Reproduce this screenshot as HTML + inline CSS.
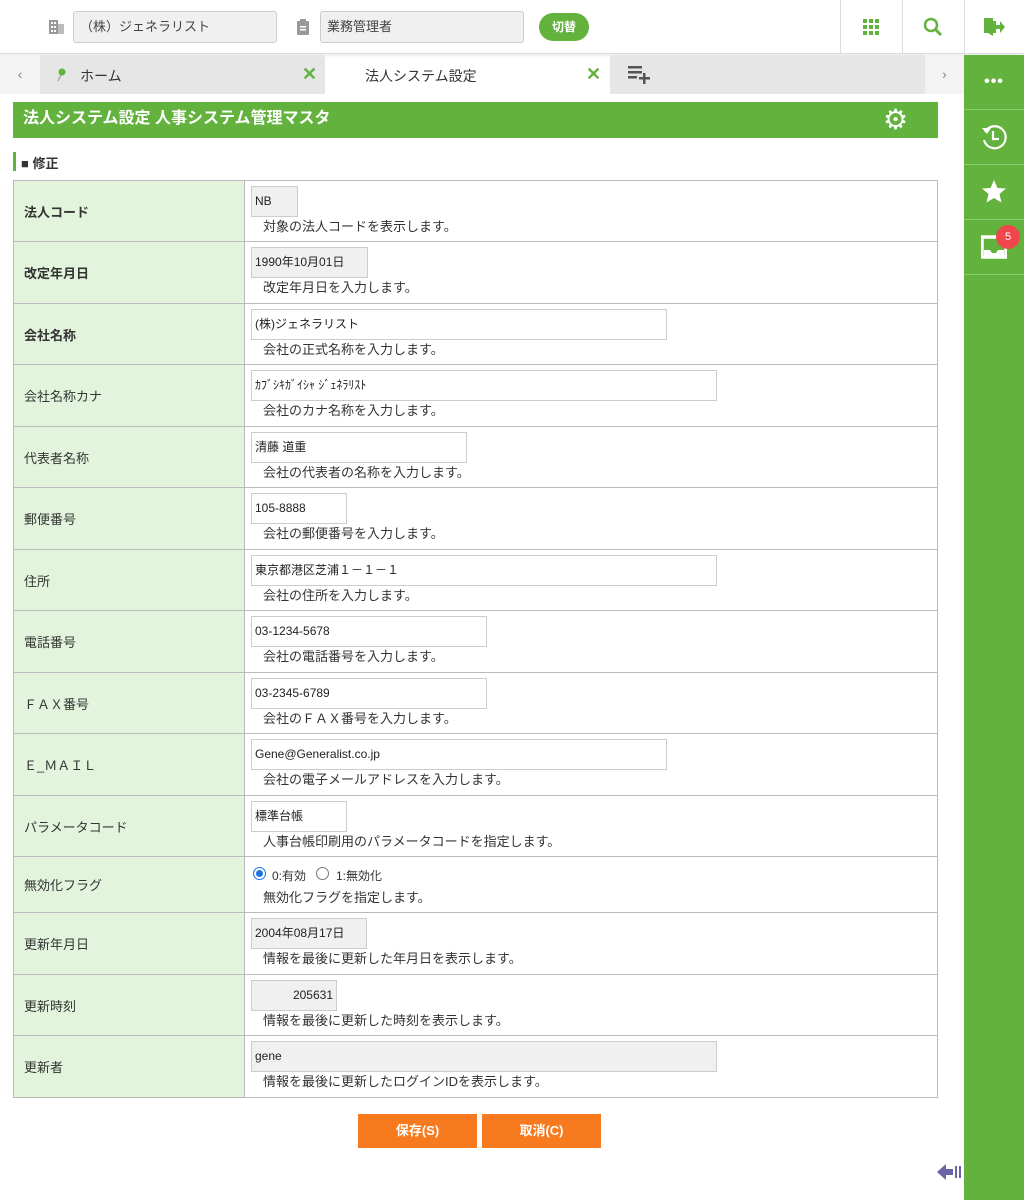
<!DOCTYPE html>
<html><head><meta charset="utf-8"><style>
*{box-sizing:border-box;margin:0;padding:0}
body{width:1024px;height:1200px;overflow:hidden;background:#fff;font-family:"Liberation Sans","Noto Sans CJK JP",sans-serif;font-size:13px;color:#333;position:relative}
.a{position:absolute}
.top{left:0;top:0;width:1024px;height:54px;background:#fff;border-bottom:1px solid #ddd;box-shadow:0 2px 3px rgba(0,0,0,.08)}
.sel{height:32px;top:11px;background:#f0f0f0;border:1px solid #ccc;border-radius:3px;font-size:13px;line-height:30px;padding-left:6px;color:#444}
.row{left:13px;width:925px;border:1px solid #bbb;border-top:none}
.lab{position:absolute;left:0;top:0;bottom:0;width:231px;background:#e2f5dc;border-right:1px solid #bbb;padding-left:10px;display:flex;align-items:center;font-size:13px;color:#333}
.inp{position:absolute;left:237px;top:5px;height:31px;border:1px solid #ccc;background:#fff;font-size:12px;line-height:29px;padding-left:3px;color:#222}
.g{background:#f0f0f0}
.ds{position:absolute;left:249px;top:35px;font-size:13px;color:#333}
.sb{left:964px;top:55px;width:60px;height:1145px;background:#62b23d}
.sbi{position:absolute;left:0;width:60px;height:55px;border-bottom:1px solid #8ccb6f;display:flex;align-items:center;justify-content:center}
.btn{top:1114px;width:119px;height:34px;background:#f77a1f;color:#fff;font-weight:bold;font-size:13px;text-align:center;line-height:34px}
</style></head><body>
<div class="a top"></div>
<svg class="a" style="left:49px;top:19px" width="16" height="16"><rect x="0" y="1" width="9" height="14" fill="#999"/><rect x="9" y="5" width="6" height="10" fill="#bbb"/><g fill="#fff"><rect x="2" y="3" width="2" height="2"/><rect x="5" y="3" width="2" height="2"/><rect x="2" y="7" width="2" height="2"/><rect x="5" y="7" width="2" height="2"/><rect x="2" y="11" width="2" height="2"/><rect x="5" y="11" width="2" height="2"/></g></svg>
<div class="a sel" style="left:73px;width:204px">（株）ジェネラリスト</div>
<svg class="a" style="left:297px;top:19px" width="12" height="16"><rect x="0" y="2" width="12" height="14" rx="1" fill="#999"/><rect x="3" y="0" width="6" height="4" fill="#999"/><rect x="3" y="7" width="6" height="1.5" fill="#fff"/><rect x="3" y="10" width="6" height="1.5" fill="#fff"/></svg>
<div class="a sel" style="left:320px;width:204px">業務管理者</div>
<div class="a" style="left:539px;top:13px;width:50px;height:28px;border-radius:14px;background:#62b23d;color:#fff;font-weight:bold;font-size:12px;text-align:center;line-height:28px">切替</div>
<div class="a" style="left:840px;top:0;width:1px;height:54px;background:#ddd"></div>
<div class="a" style="left:902px;top:0;width:1px;height:54px;background:#ddd"></div>
<div class="a" style="left:964px;top:0;width:1px;height:54px;background:#ddd"></div>
<svg class="a" style="left:863px;top:19px" width="17" height="17" fill="#62b23d"><rect x="0" y="0" width="4" height="4"/><rect x="6" y="0" width="4" height="4"/><rect x="12" y="0" width="4" height="4"/><rect x="0" y="6" width="4" height="4"/><rect x="6" y="6" width="4" height="4"/><rect x="12" y="6" width="4" height="4"/><rect x="0" y="12" width="4" height="4"/><rect x="6" y="12" width="4" height="4"/><rect x="12" y="12" width="4" height="4"/></svg>
<svg class="a" style="left:923px;top:17px" width="20" height="20"><circle cx="8" cy="8" r="6" fill="none" stroke="#62b23d" stroke-width="2.5"/><line x1="12" y1="12" x2="18" y2="18" stroke="#62b23d" stroke-width="3"/></svg>
<svg class="a" style="left:983px;top:17px" width="22" height="20" fill="#62b23d"><path d="M1 1h9v18l-5-3h-4z"/><rect x="10" y="4" width="3" height="12"/><path d="M12 8h5v-4l5 6-5 6v-4h-5z"/></svg>
<div class="a" style="left:0;top:55px;width:40px;height:39px;background:#f3f3f3;color:#888;text-align:center;line-height:39px;font-size:14px">&lsaquo;</div>
<div class="a" style="left:40px;top:55px;width:285px;height:39px;background:#e6e6e6"></div>
<svg class="a" style="left:56px;top:68px" width="10" height="14"><circle cx="6" cy="4" r="3.5" fill="#62b23d"/><line x1="5" y1="7" x2="2" y2="13" stroke="#aaa" stroke-width="1.5"/></svg>
<div class="a" style="left:80px;top:66px;font-size:14px;color:#333">ホーム</div>
<div class="a" style="left:302px;top:64px;font-size:18px;font-weight:bold;color:#62b23d">✕</div>
<div class="a" style="left:365px;top:66px;font-size:14px;color:#333">法人システム設定</div>
<div class="a" style="left:586px;top:64px;font-size:18px;font-weight:bold;color:#62b23d">✕</div>
<div class="a" style="left:610px;top:55px;width:315px;height:39px;background:#e6e6e6"></div>
<svg class="a" style="left:628px;top:66px" width="24" height="18" fill="#555"><rect x="0" y="0" width="14" height="2.5"/><rect x="0" y="5" width="14" height="2.5"/><rect x="0" y="10" width="9" height="2.5"/><rect x="15" y="7" width="2.5" height="11"/><rect x="11" y="11" width="11" height="2.5"/></svg>
<div class="a" style="left:925px;top:55px;width:39px;height:39px;background:#f3f3f3;color:#888;text-align:center;line-height:39px;font-size:14px">&rsaquo;</div>
<div class="a" style="left:13px;top:102px;width:925px;height:36px;background:#62b23d;color:#fff;font-weight:bold;font-size:16px;line-height:34px;padding-left:10px">法人システム設定 人事システム管理マスタ</div>
<div class="a" style="left:883px;top:104px;color:#fff;font-size:28px;line-height:32px">⚙</div>
<div class="a" style="left:13px;top:152px;width:3px;height:19px;background:#62b23d"></div>
<div class="a" style="left:21px;top:153px;font-weight:bold;font-size:13px">■ 修正</div>
<div class="a" style="left:13px;top:180px;width:925px;height:1px;background:#bbb"></div>
<div class="a row" style="top:181px;height:61px"><div class="lab" style="font-weight:bold">法人コード</div><div class="inp g" style="width:47px">NB</div><div class="ds">対象の法人コードを表示します。</div></div>
<div class="a row" style="top:242px;height:62px"><div class="lab" style="font-weight:bold">改定年月日</div><div class="inp g" style="width:117px">1990年10月01日</div><div class="ds">改定年月日を入力します。</div></div>
<div class="a row" style="top:304px;height:61px"><div class="lab" style="font-weight:bold">会社名称</div><div class="inp" style="width:416px">(株)ジェネラリスト</div><div class="ds">会社の正式名称を入力します。</div></div>
<div class="a row" style="top:365px;height:62px"><div class="lab">会社名称カナ</div><div class="inp" style="width:466px">ｶﾌﾞｼｷｶﾞｲｼｬ ｼﾞｪﾈﾗﾘｽﾄ</div><div class="ds">会社のカナ名称を入力します。</div></div>
<div class="a row" style="top:427px;height:61px"><div class="lab">代表者名称</div><div class="inp" style="width:216px">清藤 道重</div><div class="ds">会社の代表者の名称を入力します。</div></div>
<div class="a row" style="top:488px;height:62px"><div class="lab">郵便番号</div><div class="inp" style="width:96px">105-8888</div><div class="ds">会社の郵便番号を入力します。</div></div>
<div class="a row" style="top:550px;height:61px"><div class="lab">住所</div><div class="inp" style="width:466px">東京都港区芝浦１－１－１</div><div class="ds">会社の住所を入力します。</div></div>
<div class="a row" style="top:611px;height:62px"><div class="lab">電話番号</div><div class="inp" style="width:236px">03-1234-5678</div><div class="ds">会社の電話番号を入力します。</div></div>
<div class="a row" style="top:673px;height:61px"><div class="lab">ＦＡＸ番号</div><div class="inp" style="width:236px">03-2345-6789</div><div class="ds">会社のＦＡＸ番号を入力します。</div></div>
<div class="a row" style="top:734px;height:62px"><div class="lab">Ｅ_ＭＡＩＬ</div><div class="inp" style="width:416px">Gene@Generalist.co.jp</div><div class="ds">会社の電子メールアドレスを入力します。</div></div>
<div class="a row" style="top:796px;height:61px"><div class="lab">パラメータコード</div><div class="inp" style="width:96px">標準台帳</div><div class="ds">人事台帳印刷用のパラメータコードを指定します。</div></div>
<div class="a row" style="top:857px;height:56px"><div class="lab">無効化フラグ</div>
<div style="position:absolute;left:239px;top:10px;width:13px;height:13px;border-radius:50%;border:1px solid #1a73e8;background:#fff"><div style="margin:2px;width:7px;height:7px;border-radius:50%;background:#1a73e8"></div></div>
<div style="position:absolute;left:258px;top:10px;font-size:12px">0:有効</div>
<div style="position:absolute;left:302px;top:10px;width:13px;height:13px;border-radius:50%;border:1px solid #777;background:#fff"></div>
<div style="position:absolute;left:322px;top:10px;font-size:12px">1:無効化</div>
<div class="ds" style="top:30px">無効化フラグを指定します。</div></div>
<div class="a row" style="top:913px;height:62px"><div class="lab">更新年月日</div><div class="inp g" style="width:116px">2004年08月17日</div><div class="ds">情報を最後に更新した年月日を表示します。</div></div>
<div class="a row" style="top:975px;height:61px"><div class="lab">更新時刻</div><div class="inp g" style="width:86px;text-align:right;padding-right:3px">205631</div><div class="ds">情報を最後に更新した時刻を表示します。</div></div>
<div class="a row" style="top:1036px;height:62px"><div class="lab">更新者</div><div class="inp g" style="width:466px">gene</div><div class="ds">情報を最後に更新したログインIDを表示します。</div></div>
<div class="a btn" style="left:358px">保存(S)</div>
<div class="a btn" style="left:482px">取消(C)</div>
<svg class="a" style="left:937px;top:1162px" width="26" height="20" fill="#6a64a8"><path d="M0 10l9-8v5h7v6h-7v5z"/><rect x="18" y="4" width="2" height="12"/><rect x="22" y="4" width="2" height="12"/></svg>
<div class="a sb">
<div class="sbi" style="top:0"><span style="color:#fff;font-size:16px;font-weight:bold;letter-spacing:1px;line-height:10px">•••</span></div>
<div class="sbi" style="top:55px"><svg width="28" height="28"><path d="M5 9A11 11 0 1 1 4 17" fill="none" stroke="#fff" stroke-width="2.2"/><path d="M2 5l5 6 4-6z" fill="#fff"/><path d="M13 8v8h6" fill="none" stroke="#fff" stroke-width="2.2"/></svg></div>
<div class="sbi" style="top:110px"><svg width="26" height="26"><path d="M13 1l3.5 8 8.5.5-6.5 5.5 2 8.5-7.5-4.5-7.5 4.5 2-8.5L1 9.5 9.5 9z" fill="#fff"/></svg></div>
<div class="sbi" style="top:165px"><svg width="26" height="24"><path d="M1 2h24v20H1z" fill="none" stroke="#fff" stroke-width="3.5"/><path d="M3 15h6l2 3h4l2-3h6v6H3z" fill="#fff"/></svg></div>
</div>
<div class="a" style="left:996px;top:225px;width:24px;height:24px;border-radius:50%;background:#f0474c;color:#fff;font-size:11px;text-align:center;line-height:24px">5</div>
</body></html>
